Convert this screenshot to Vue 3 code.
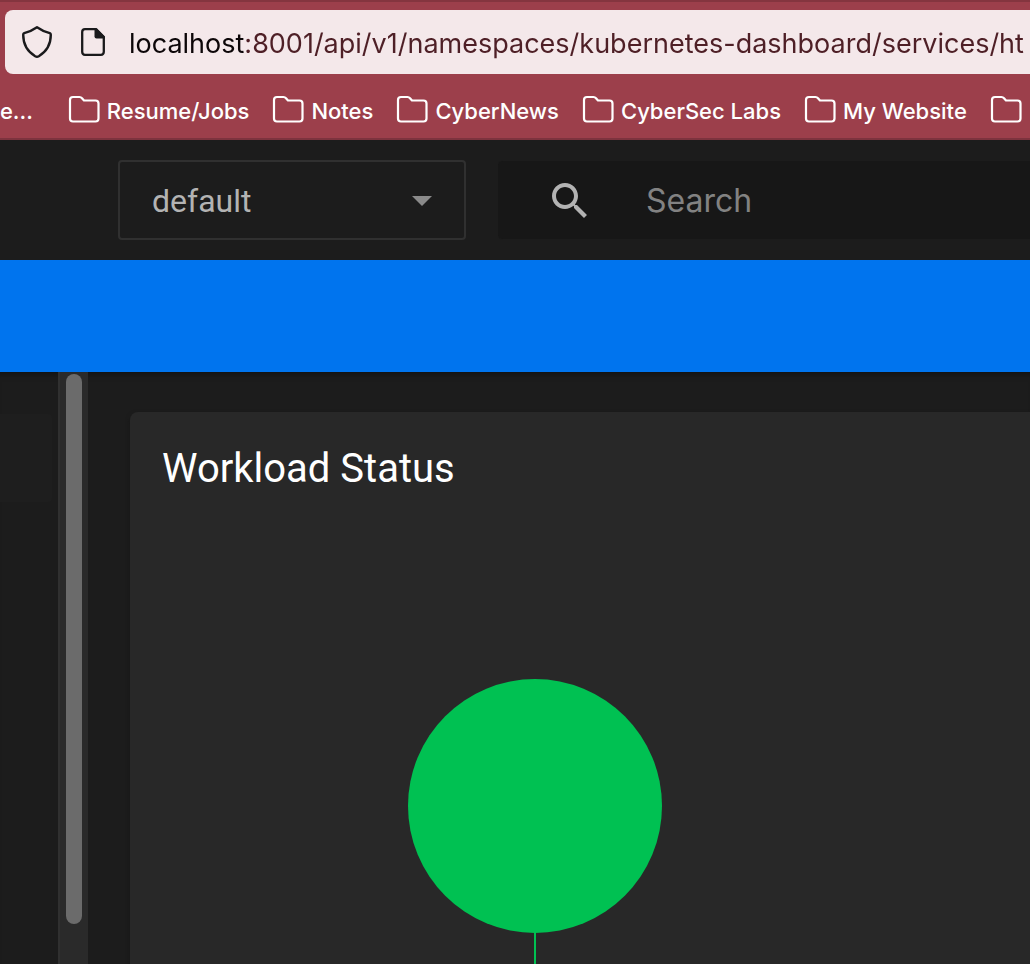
<script setup>
import { ref } from 'vue'

const address = ref('localhost:8001/api/v1/namespaces/kubernetes-dashboard/services/ht')
const namespace = ref('default')
const query = ref('')
const bookmarks = ['De...', 'Resume/Jobs', 'Notes', 'CyberNews', 'CyberSec Labs', 'My Website', '']
</script>

<template>
  <div class="window">
    <header class="browser">
      <div class="address-bar">
        <button class="icon-button" type="button" aria-label="Tracking protection">
          <svg width="32" height="34" viewBox="0 0 32 34" fill="none" stroke="#1a1a1c" stroke-width="2.4" stroke-linejoin="round">
            <path d="M16 2.2 C12 5 7.500 7 3.200 8.200 Q2.200 8.600 2.200 9.800 C2.200 19.500 6.500 26.600 14.200 31.200 Q16 32.200 17.800 31.200 C25.500 26.600 29.800 19.500 29.800 9.800 Q29.800 8.600 28.800 8.200 C24.500 7 20 5 16 2.200 Z" />
          </svg>
        </button>
        <button class="icon-button" type="button" aria-label="Site information">
          <svg width="26" height="30" viewBox="0 0 26 30">
            <path d="M5 2.200 H16 L23.800 10 V24.800 Q23.800 27.800 20.800 27.800 H5 Q2.200 27.800 2.200 24.800 V5 Q2.200 2.200 5 2.200 Z" fill="none" stroke="#1a1a1c" stroke-width="2.300" />
            <path d="M14.500 1.500 H17 L24.800 9.500 V11.500 H16.500 Q14.500 11.500 14.500 9.500 Z" fill="#1a1a1c" />
          </svg>
        </button>
        <input v-model="address" class="address" type="text" aria-label="Address" spellcheck="false" />
      </div>
      <nav class="bookmarks" aria-label="Bookmarks">
        <a v-for="(name, i) in bookmarks" :key="i" class="bookmark" href="#" :aria-label="name || 'Folder'">
          <svg v-if="i > 0" width="32" height="28" viewBox="0 0 32 28" fill="none" stroke="#fff" stroke-width="2.2" stroke-linejoin="round">
            <path d="M5 2 H11.500 Q13 2 14 3.200 L16 5.500 H27.500 Q30.500 5.500 30.500 8.500 V23.500 Q30.500 26.500 27.500 26.500 H5 Q2 26.500 2 23.500 V5 Q2 2 5 2 Z" />
          </svg>
          <span>{{ name }}</span>
        </a>
      </nav>
    </header>

    <div class="toolbar">
      <div class="namespace">
        <select v-model="namespace" aria-label="Namespace">
          <option value="default">default</option>
        </select>
        <svg class="caret" width="20" height="10" viewBox="0 0 20 10" aria-hidden="true">
          <path d="M0 0 H20 L10 10 Z" fill="#8a8a8a" />
        </svg>
      </div>
      <label class="search">
        <svg width="35" height="35" viewBox="3 3 17.500 17.500" fill="#b3b3b3" aria-hidden="true">
          <path d="M15.500 14h-.79l-.28-.27C15.410 12.590 16 11.110 16 9.500 16 5.910 13.090 3 9.500 3S3 5.910 3 9.500 5.910 16 9.500 16c1.610 0 3.090-.59 4.230-1.570l.27.28v.79l5 4.990L20.490 19l-4.990-5zm-6 0C7.010 14 5 11.990 5 9.500S7.010 5 9.500 5 14 7.010 14 9.500 11.990 14 9.500 14z" />
        </svg>
        <input v-model="query" type="search" placeholder="Search" aria-label="Search" />
      </label>
    </div>

    <div class="banner"></div>

    <div class="body">
      <aside class="sidebar"><div class="nav-item"></div></aside>
      <div class="track"><div class="thumb"></div></div>
      <main class="content">
        <section class="card">
          <h1>Workload Status</h1>
          <svg class="chart" width="254" height="360" viewBox="0 0 254 360" role="img" aria-label="Workload status chart">
            <circle cx="127" cy="127" r="127" fill="#00c152" />
            <path d="M127 253 V360" stroke="#00c152" stroke-width="2" />
          </svg>
        </section>
      </main>
    </div>
  </div>
</template>

<style>
body {
  margin: 0;
  background: #1c1c1c;
}
</style>

<style scoped>
.window {
  display: flex;
  flex-direction: column;
  height: 100vh;
  overflow: hidden;
  background: #1c1c1c;
  font-family: Roboto, "Liberation Sans", sans-serif;
}

.window * {
  box-sizing: border-box;
}

.browser {
  flex: none;
  padding-top: 8px;
  border-top: 2px solid #84353f;
  border-bottom: 2px solid #7d333e;
  background: #9c3f4b;
  font-family: Inter, "Liberation Sans", sans-serif;
}

.address-bar {
  display: flex;
  align-items: center;
  height: 64px;
  margin-left: 5px;
  padding-left: 16px;
  border-radius: 8px 0 0 8px;
  background: #f4e8ea;
}

.icon-button {
  display: flex;
  flex: none;
  margin: 0 27px 0 0;
  padding: 0;
  border: 0;
  background: none;
}

.icon-button + .icon-button {
  margin-right: 23px;
}

.address {
  flex: 1;
  min-width: 0;
  height: 48px;
  padding: 2px 0 0;
  border: 0;
  outline: 0;
  background: linear-gradient(90deg, #0c0608 116px, #4e1f26 116px);
  background-clip: text;
  color: transparent;
  font: 400 27px/46px Inter, "Liberation Sans", sans-serif;
}

.bookmarks {
  display: flex;
  gap: 23px;
  align-items: center;
  height: 64px;
  margin-left: -16px;
  padding-top: 10px;
  overflow: hidden;
}

.bookmark {
  display: flex;
  flex: none;
  gap: 7px;
  align-items: center;
  color: #fff;
  font-size: 22px;
  font-weight: 500;
  line-height: 32px;
  text-decoration: none;
}

.bookmark:first-child {
  margin-right: 12px;
}

.bookmark svg {
  margin-top: -4px;
}

.toolbar {
  display: flex;
  flex: none;
  gap: 32px;
  padding: 20px 0 20px 118px;
  background: #1c1c1c;
}

.namespace {
  position: relative;
  flex: none;
  width: 348px;
}

.namespace select {
  width: 100%;
  height: 80px;
  padding: 2px 32px 0;
  border: 2px solid #303030;
  border-radius: 4px;
  outline: 0;
  background: #1c1c1c;
  color: #b3b3b3;
  font: 400 32px/40px Roboto, sans-serif;
  appearance: none;
}

.caret {
  position: absolute;
  top: 36px;
  right: 34px;
  pointer-events: none;
}

.search {
  display: flex;
  flex: 1;
  gap: 59px;
  align-items: center;
  height: 80px;
  padding-left: 54px;
  border-top: 1px solid #1c1c1c;
  border-bottom: 1px solid #1c1c1c;
  border-radius: 5px 0 0 5px;
  background: #171717;
}

.search input {
  flex: 1;
  min-width: 0;
  padding: 2px 0 0;
  border: 0;
  outline: 0;
  background: none;
  color: #b3b3b3;
  font: 400 32px/40px Inter, sans-serif;
}

.search input::placeholder {
  color: #828282;
}

.search svg {
  flex: none;
}

.banner {
  flex: none;
  height: 112px;
  background: #0074ee;
}

.body {
  display: flex;
  flex: 1;
  min-height: 0;
  box-shadow: inset 0 8px 6px -6px #101010;
}

.sidebar {
  flex: none;
  width: 58px;
  padding: 42px 6px 0 0;
}

.nav-item {
  height: 88px;
  border-radius: 0 4px 4px 0;
  background: #1e1e1e;
}

.track {
  flex: none;
  width: 30px;
  padding: 2px 6px 40px;
  border-left: 2px solid #303030;
  background: #2a2a2a;
}

.thumb {
  width: 16px;
  height: 100%;
  border-radius: 8px;
  background: #6b6b6b;
}

.content {
  flex: 1;
  min-width: 0;
  padding: 40px 0 0 42px;
}

.card {
  height: 100%;
  padding: 33px 0 0 32px;
  overflow: hidden;
  border-radius: 8px 0 0;
  background: #282828;
  box-shadow: 0 2px 4px #161616;
}

.card h1 {
  margin: 0;
  color: #fff;
  font-size: 40px;
  font-weight: 400;
  line-height: 48px;
}

.chart {
  display: block;
  margin: 186px 0 0 246px;
}
</style>
